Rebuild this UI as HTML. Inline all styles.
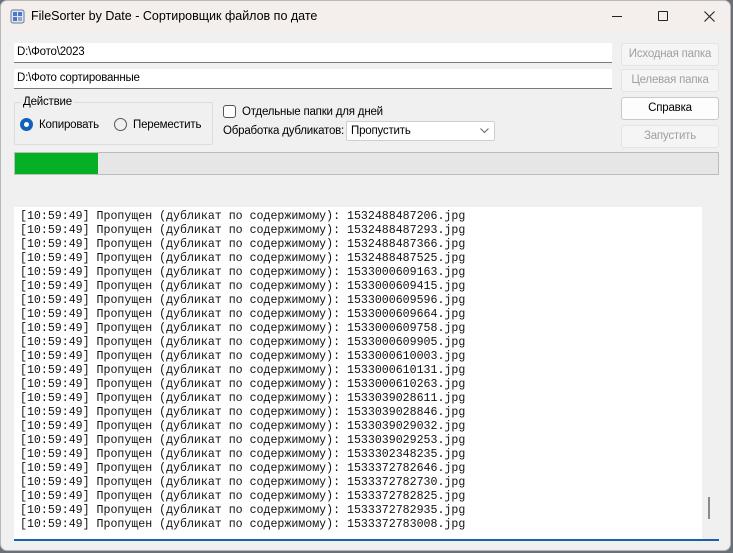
<!DOCTYPE html>
<html><head><meta charset="utf-8"><style>
*{margin:0;padding:0;box-sizing:border-box}
body{width:733px;height:553px;background:#6a7077;overflow:hidden;font-family:"Liberation Sans","Noto Sans CJK SC",sans-serif;font-size:11.5px;letter-spacing:-0.2px;color:#000;position:relative}
.win{position:absolute;left:0;top:0;width:731px;height:551px;background:#f0f0f0;border:1px solid #b8b8b8;border-radius:7px;overflow:hidden}
.title{position:absolute;left:0;top:0;width:100%;height:31px;background:#f4eeec}
.title .t{position:absolute;left:30px;top:8px;font-size:12.5px;letter-spacing:0}
.abs{position:absolute}
.inp{position:absolute;background:#fff;border-bottom:1px solid #7a7a7a;height:20px;padding:3px 0 0 3px;border-radius:2px 2px 0 0}
.btn{position:absolute;width:98px;height:23px;border:1px solid #e3e3e3;border-radius:3px;background:#f5f5f5;color:#a0a0a0;text-align:center;line-height:21px}
.log{position:absolute;left:13px;top:206px;width:705px;height:334px;background:#fff;border-bottom:2px solid #1a62a8}
.lines{position:absolute;left:6px;top:3px;font-family:"Liberation Mono","DejaVu Sans Mono",monospace;font-size:11.6px;letter-spacing:0;line-height:14px;color:#111;white-space:pre}
</style></head><body>
<div class="win">
<div class="title">
<svg class="abs" style="left:9px;top:8px" width="15" height="15" viewBox="0 0 15 15"><rect x="1" y="1" width="13" height="13" rx="2" fill="#dfe6f2" stroke="#6b7a96"/><rect x="3" y="3" width="4" height="4" fill="#4a78c8"/><rect x="8" y="3" width="4" height="4" fill="#4a78c8"/><rect x="3" y="8" width="4" height="4" fill="#4a78c8"/><rect x="8" y="8" width="4" height="4" fill="#8ca6d6"/></svg>
<div class="t">FileSorter by Date - Сортировщик файлов по дате</div>
<div class="abs" style="left:611px;top:15px;width:10px;height:1px;background:#222"></div>
<div class="abs" style="left:657px;top:10px;width:10px;height:10px;border:1px solid #222;border-radius:1px"></div>
<svg class="abs" style="left:703px;top:10px" width="11" height="11"><path d="M0.5 0.5L10.5 10.5M10.5 0.5L0.5 10.5" stroke="#222" stroke-width="1.1"/></svg>
</div>
<div class="inp" style="left:13px;top:42px;width:598px">D:\Фото\2023</div>
<div class="inp" style="left:13px;top:68px;width:598px">D:\Фото сортированные</div>
<div class="btn" style="left:620px;top:42px">Исходная папка</div>
<div class="btn" style="left:620px;top:68px">Целевая папка</div>
<div class="btn" style="left:620px;top:96px;border-color:#c8c8c8;background:#fdfdfd;color:#000">Справка</div>
<div class="btn" style="left:620px;top:124px">Запустить</div>
<div class="abs" style="left:13px;top:101px;width:199px;height:43px;border:1px solid #dcdcdc;border-radius:2px"></div>
<div class="abs" style="left:20px;top:95px;background:#f0f0f0;padding:0 2px">Действие</div>
<div class="abs" style="left:19px;top:117px;width:13px;height:13px;border-radius:50%;background:#0f62b5"><div class="abs" style="left:4px;top:4px;width:5px;height:5px;border-radius:50%;background:#fff"></div></div>
<div class="abs" style="left:38px;top:118px">Копировать</div>
<div class="abs" style="left:113px;top:117px;width:13px;height:13px;border-radius:50%;border:1px solid #555"></div>
<div class="abs" style="left:132px;top:118px">Переместить</div>
<div class="abs" style="left:222px;top:104px;width:13px;height:13px;border:1px solid #555;border-radius:3px;background:#fff"></div>
<div class="abs" style="left:241px;top:105px">Отдельные папки для дней</div>
<div class="abs" style="left:222px;top:124px">Обработка дубликатов:</div>
<div class="abs" style="left:345px;top:120px;width:149px;height:20px;background:#fff;border:1px solid #cfcfcf;border-radius:2px;padding:3px 0 0 4px">Пропустить</div>
<svg class="abs" style="left:479px;top:127px" width="9" height="6"><path d="M0.5 0.5L4.5 4.5L8.5 0.5" stroke="#666" fill="none"/></svg>
<div class="abs" style="left:13px;top:151px;width:705px;height:23px;background:#e6e6e6;border:1px solid #bcbcbc"><div style="width:83px;height:21px;background:#06b025"></div></div>
<div class="log">
<div class="abs" style="left:688px;top:0;width:17px;height:332px;background:#f0f0f0"></div>
<div class="abs" style="left:694px;top:290px;width:2px;height:22px;background:#8a8a8a"></div>
<div class="lines">[10:59:49] Пропущен (дубликат по содержимому): 1532488487206.jpg
[10:59:49] Пропущен (дубликат по содержимому): 1532488487293.jpg
[10:59:49] Пропущен (дубликат по содержимому): 1532488487366.jpg
[10:59:49] Пропущен (дубликат по содержимому): 1532488487525.jpg
[10:59:49] Пропущен (дубликат по содержимому): 1533000609163.jpg
[10:59:49] Пропущен (дубликат по содержимому): 1533000609415.jpg
[10:59:49] Пропущен (дубликат по содержимому): 1533000609596.jpg
[10:59:49] Пропущен (дубликат по содержимому): 1533000609664.jpg
[10:59:49] Пропущен (дубликат по содержимому): 1533000609758.jpg
[10:59:49] Пропущен (дубликат по содержимому): 1533000609905.jpg
[10:59:49] Пропущен (дубликат по содержимому): 1533000610003.jpg
[10:59:49] Пропущен (дубликат по содержимому): 1533000610131.jpg
[10:59:49] Пропущен (дубликат по содержимому): 1533000610263.jpg
[10:59:49] Пропущен (дубликат по содержимому): 1533039028611.jpg
[10:59:49] Пропущен (дубликат по содержимому): 1533039028846.jpg
[10:59:49] Пропущен (дубликат по содержимому): 1533039029032.jpg
[10:59:49] Пропущен (дубликат по содержимому): 1533039029253.jpg
[10:59:49] Пропущен (дубликат по содержимому): 1533302348235.jpg
[10:59:49] Пропущен (дубликат по содержимому): 1533372782646.jpg
[10:59:49] Пропущен (дубликат по содержимому): 1533372782730.jpg
[10:59:49] Пропущен (дубликат по содержимому): 1533372782825.jpg
[10:59:49] Пропущен (дубликат по содержимому): 1533372782935.jpg
[10:59:49] Пропущен (дубликат по содержимому): 1533372783008.jpg</div>
</div>
</div>
</body></html>
